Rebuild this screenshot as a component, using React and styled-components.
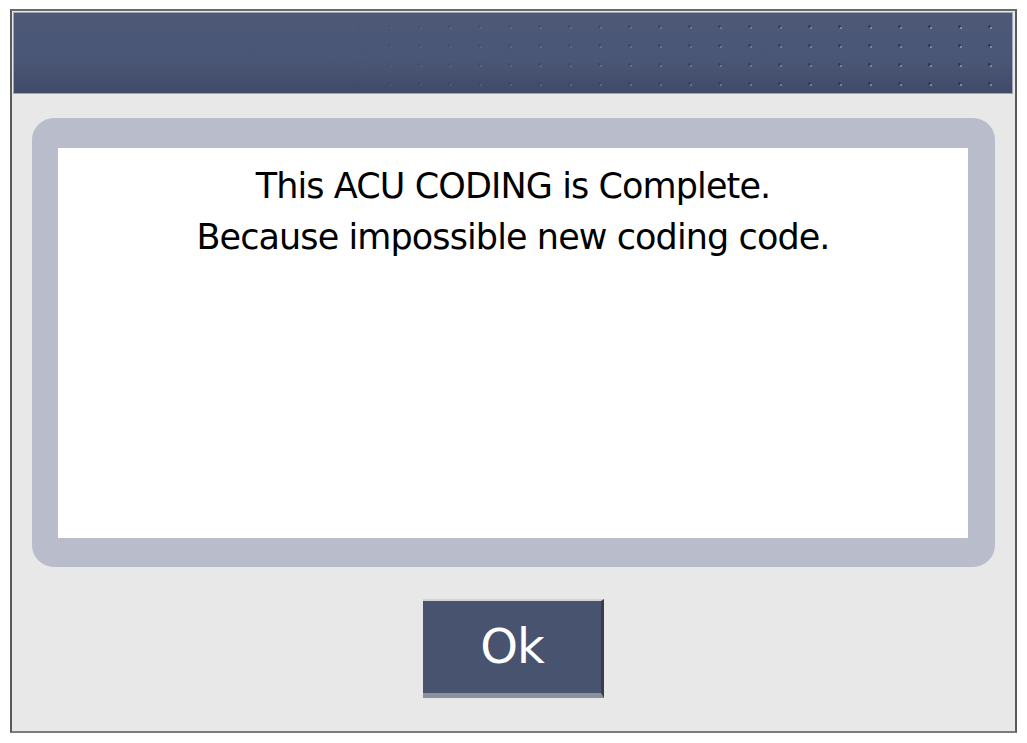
import React from 'react'
import styled, { createGlobalStyle } from 'styled-components'

const GlobalStyle = createGlobalStyle`
    html, body {
        margin: 0;
        padding: 0;
        background: #ffffff;
    }

    body {
        font-family: "Liberation Sans", Arial, sans-serif;
    }
`

const Page = styled.div`
    width: 1027px;
    height: 743px;
    padding: 9px 10px 10px 10px;
    box-sizing: border-box;
`

const Frame = styled.div`
    height: 100%;
    box-sizing: border-box;
    display: flex;
    flex-direction: column;
    background: #e8e8e8;
    border: 2px solid #5a5a5a;
    border-top-color: #6a6a6a;
    border-bottom-color: #7c7c7c;
    padding: 1px 2px 0 1px;
`

const Header = styled.div`
    position: relative;
    height: 82px;
    flex-shrink: 0;
    background: linear-gradient(180deg, #4d5977 0%, #4a5675 60%, #3f4a67 100%);
    box-shadow: inset 0 0 0 1px #9ea6b8;

    &::after {
        content: '';
        position: absolute;
        inset: 0;
        background-image:
            radial-gradient(circle at 3px 3px, #7d89a6 1.2px, transparent 1.6px),
            radial-gradient(circle at 1.5px 1.5px, #2f3850 1.2px, transparent 1.6px);
        background-size: 30px 19px, 30px 19px;
        background-position: 15px 13px, 15px 13px;
        -webkit-mask-image: linear-gradient(90deg, transparent 30%, rgba(0, 0, 0, 0.45) 60%, #000 92%);
        mask-image: linear-gradient(90deg, transparent 30%, rgba(0, 0, 0, 0.45) 60%, #000 92%);
    }
`

const Body = styled.div`
    flex: 1;
    display: flex;
    flex-direction: column;
    align-items: center;
    padding: 24px 18px 0 19px;
`

const Panel = styled.div`
    align-self: stretch;
    height: 449px;
    box-sizing: border-box;
    background: #b8bccb;
    border-radius: 22px;
    padding: 30px 27px 29px 26px;
`

const MessageBox = styled.div`
    height: 100%;
    background: #ffffff;
    display: flex;
    flex-direction: column;
    align-items: center;
    padding-top: 13px;
    box-sizing: border-box;
`

const Line = styled.div`
    font-family: "DejaVu Sans", sans-serif;
    font-size: 35px;
    line-height: 51px;
    color: #000000;
    letter-spacing: -0.9px;
    white-space: nowrap;
`

const OkButton = styled.button`
    margin-top: 32px;
    width: 181px;
    height: 99px;
    box-sizing: border-box;
    background: #48536f;
    border: none;
    border-top: 2px solid #d4d4d8;
    border-right: 3px solid #3a3d48;
    border-bottom: 5px solid #8c909c;
    color: #ffffff;
    font-family: "DejaVu Sans", sans-serif;
    font-size: 48px;
    letter-spacing: -1px;
    padding: 0 0 2px 0;
    cursor: pointer;
`

const App = () => {
    return (
        <>
            <GlobalStyle />
            <Page>
                <Frame>
                    <Header />
                    <Body>
                        <Panel>
                            <MessageBox>
                                <Line>This ACU CODING is Complete.</Line>
                                <Line>Because impossible new coding code.</Line>
                            </MessageBox>
                        </Panel>
                        <OkButton>Ok</OkButton>
                    </Body>
                </Frame>
            </Page>
        </>
    )
}

export default App
